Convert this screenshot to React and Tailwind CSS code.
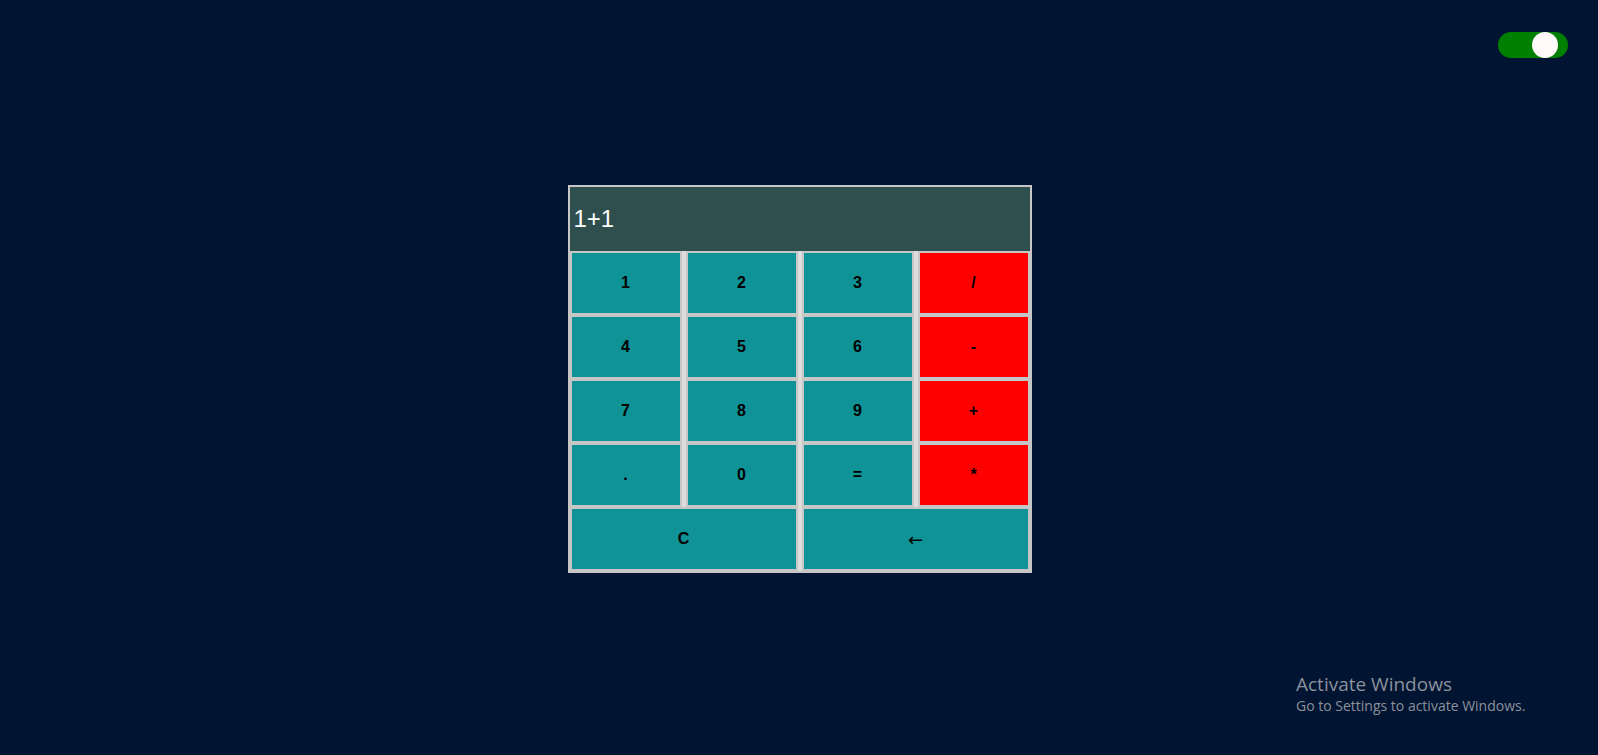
const KEYS = [
    { label: "1" },
    { label: "2" },
    { label: "3" },
    { label: "/", op: true },
    { label: "4" },
    { label: "5" },
    { label: "6" },
    { label: "-", op: true },
    { label: "7" },
    { label: "8" },
    { label: "9" },
    { label: "+", op: true },
    { label: "." },
    { label: "0" },
    { label: "=" },
    { label: "*", op: true },
];

function Key({ label, op, wide, arrow }) {
    return (
        <button
            className={
                "flex h-16 items-center justify-center border-2 border-[#c6c6c6] text-black " +
                (op ? "bg-[#ff0000] " : "bg-[#0f9397] ") +
                (wide ? "col-span-2 " : "") +
                (arrow
                    ? "font-['DejaVu_Sans',sans-serif] text-[18px] font-normal"
                    : "text-[16px] font-bold")
            }
        >
            {label}
        </button>
    );
}

export default function App() {
    return (
        <div className="relative h-screen w-full overflow-hidden bg-[#011431] font-['Liberation_Sans',Arial,sans-serif]">
            {/* theme toggle, top right */}
            <div className="absolute left-[1498px] top-[32px] h-[26px] w-[70px] rounded-full bg-[#008000]">
                <span className="absolute left-[34px] top-0 h-[26px] w-[26px] rounded-full bg-[#fffafa]" />
            </div>

            <div className="flex justify-center pl-px pt-[185px]">
                {/* calculator: 2px silver frame, display + 4-col keypad */}
                <div className="w-[464px] border-2 border-[#c6c6c6] bg-[#dcdcdc]">
                    <div className="flex h-16 items-center bg-[#2f4f4f] pl-1 text-[24px] text-white">
                        1+1
                    </div>
                    <div className="grid grid-cols-4 gap-x-1">
                        {KEYS.map((k) => (
                            <Key key={k.label} label={k.label} op={k.op} />
                        ))}
                        <Key label="C" wide />
                        <Key label="←" wide arrow />
                    </div>
                </div>
            </div>

            {/* windows watermark overlay */}
            <div className="absolute left-[1296px] top-[672px] font-['Open_Sans',sans-serif] text-[#8b919c]">
                <div className="text-[19px] leading-6">Activate Windows</div>
                <div className="text-[14px] leading-5">Go to Settings to activate Windows.</div>
            </div>
        </div>
    );
}
